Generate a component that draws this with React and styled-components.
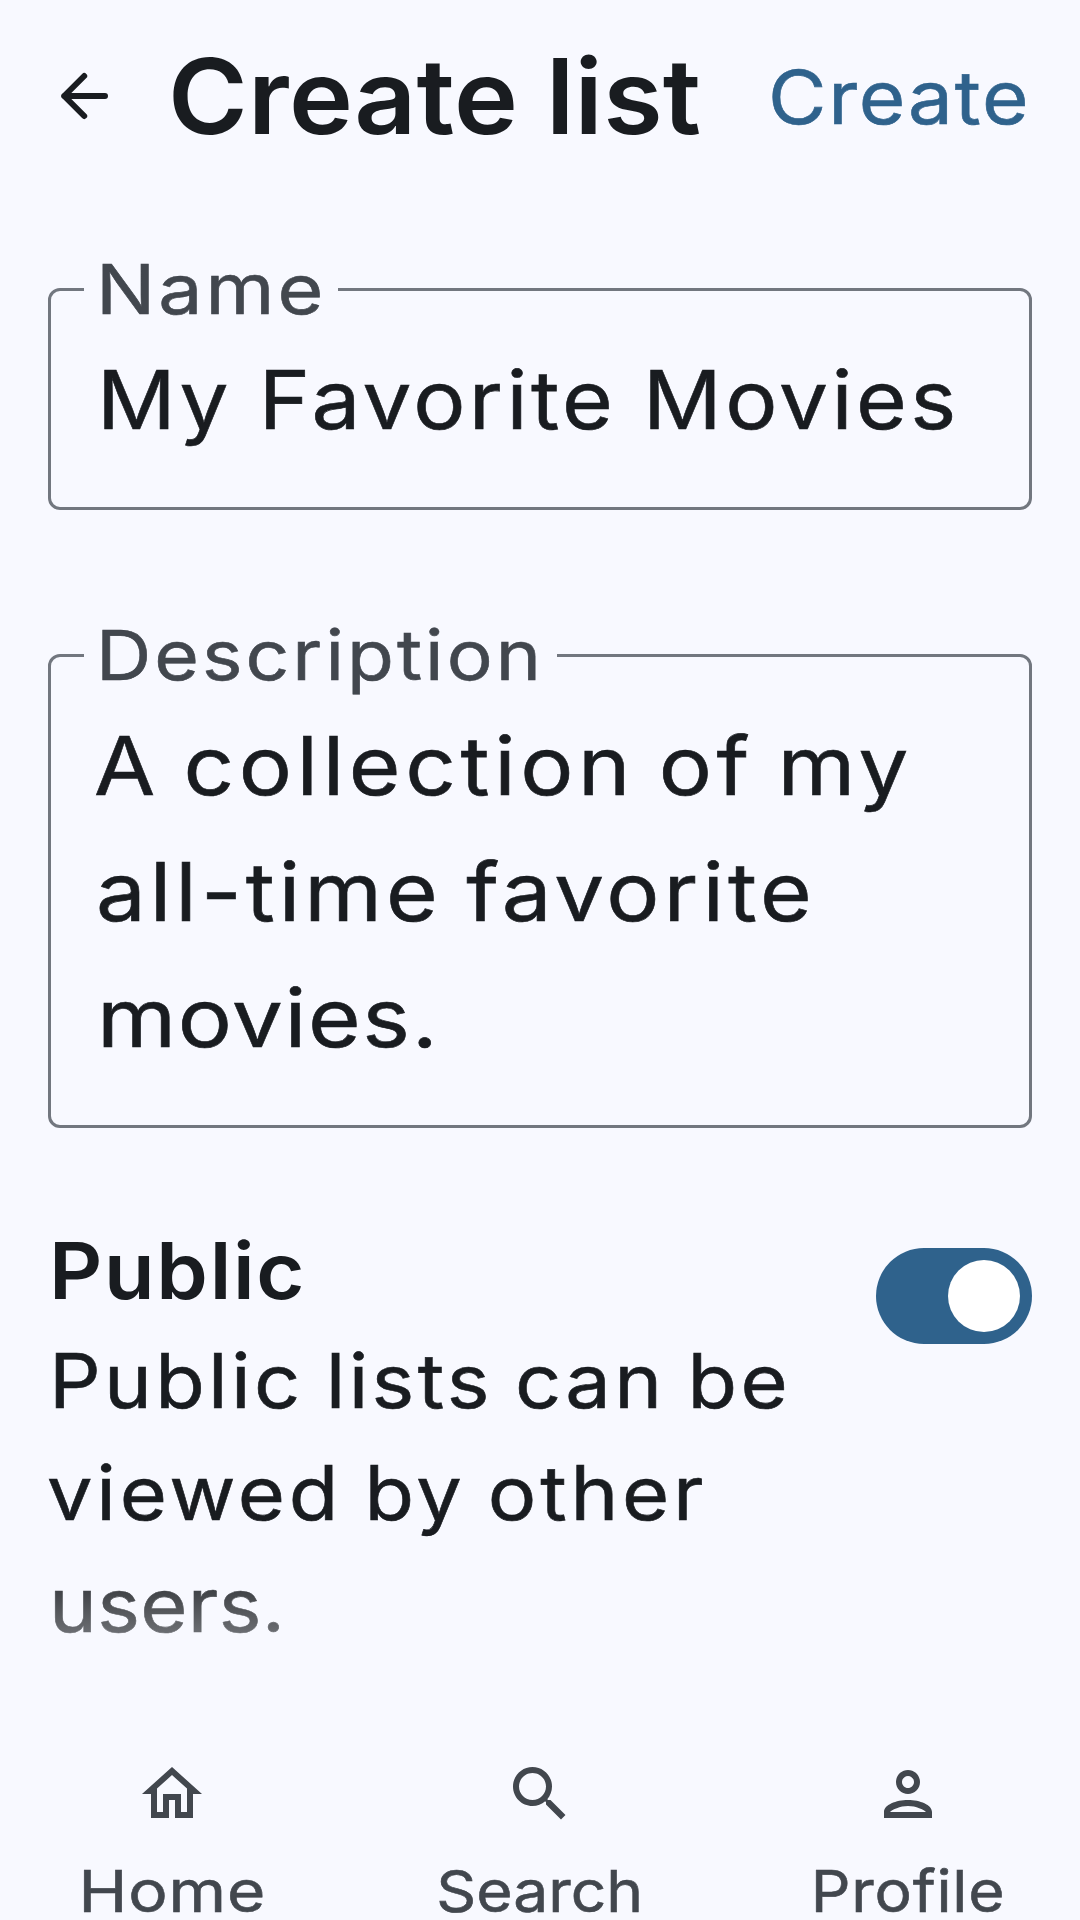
import React, { useState } from "react";
import styled, { createGlobalStyle } from "styled-components";

const color = {
  background: "#f8f9ff",
  text: "#191c20",
  muted: "#42474e",
  outline: "#72777f",
  primary: "#2f628c",
};

const GlobalStyle = createGlobalStyle`
  * { box-sizing: border-box; }
  body {
    margin: 0;
    background: ${color.background};
    color: ${color.text};
    font-family: Inter, "Liberation Sans", sans-serif;
  }
`;

const Screen = styled.div`
  display: flex;
  flex-direction: column;
  width: 1080px;
  height: 1920px;
  overflow: hidden;
  background: ${color.background};
`;

/* Widened lettering: every run of text is set a little broader than the base face. */
const Wide = styled.span`
  display: inline-block;
  margin-left: ${(p) => p.$outdent || 0}px;
  white-space: pre;
  letter-spacing: ${(p) => p.$track || 0}px;
  word-spacing: ${(p) => p.$words || 0}px;
  transform: scaleX(${(p) => p.$stretch || 1.08});
  transform-origin: ${(p) => p.$origin || "left"} center;
  -webkit-text-stroke: ${(p) => (p.$bold ? 0 : 0.6)}px currentColor;
`;

const Header = styled.header`
  display: flex;
  align-items: center;
  height: 192px;
  padding: 0 48px;
`;

const IconButton = styled.button`
  display: flex;
  width: 72px;
  height: 72px;
  padding: 0;
  border: 0;
  background: none;
  color: inherit;
`;

const Title = styled.h1`
  flex: 1;
  margin: 0 0 0 48px;
  font-size: 104px;
  font-weight: 600;
  line-height: 144px;
`;

const TextButton = styled.button`
  width: 264px;
  padding: 2px 0 0;
  border: 0;
  background: none;
  color: ${color.primary};
  font-family: inherit;
  font-size: 74px;
  font-weight: 400;
  line-height: 120px;
  text-align: left;
`;

const Content = styled.main`
  position: relative;
  flex: 1;
  min-height: 0;
  padding: 50px 48px 0;
  overflow: hidden;
`;

const Form = styled.form`
  display: flex;
  flex-direction: column;
  gap: 98px;
`;

const Field = styled.fieldset`
  min-width: 0;
  margin: 0;
  padding: 0 33px 44px;
  border: 3px solid ${color.outline};
  border-radius: 12px;
`;

const FieldLabel = styled.legend`
  width: ${(p) => p.$width}px;
  padding: 0 0 0 13px;
  color: ${color.muted};
  font-size: 69px;
  line-height: 95px;
`;

const FieldValue = styled.div`
  display: flex;
  flex-direction: column;
  align-items: flex-start;
  padding-left: 13px;
  font-size: 80.7px;
  line-height: 126px;
`;

const Setting = styled.section`
  display: flex;
  justify-content: space-between;
  margin-top: 89px;
`;

const SettingText = styled.div`
  padding-left: 1px;
`;

const SettingTitle = styled.h2`
  margin: 0;
  font-size: 78px;
  font-weight: 600;
  line-height: 108px;
`;

const SettingBody = styled.div`
  display: flex;
  flex-direction: column;
  align-items: flex-start;
  font-size: 75px;
  line-height: 112px;
`;

const Switch = styled.button`
  display: flex;
  justify-content: ${(p) => (p.$on ? "flex-end" : "flex-start")};
  width: 156px;
  height: 96px;
  margin-top: 31px;
  padding: 12px;
  border: 0;
  border-radius: 48px;
  background: ${(p) => (p.$on ? color.primary : color.outline)};
`;

const Knob = styled.span`
  width: 72px;
  height: 72px;
  border-radius: 50%;
  background: #fff;
`;

const BottomFade = styled.div`
  position: absolute;
  inset: auto 0 0;
  height: 176px;
  background: linear-gradient(rgba(248, 249, 255, 0), rgba(248, 249, 255, 0.8));
  pointer-events: none;
`;

const Nav = styled.nav`
  display: grid;
  grid-template-columns: repeat(3, 1fr);
  gap: 24px;
  height: 192px;
  padding-top: 30px;
`;

const NavItem = styled.a`
  display: flex;
  flex-direction: column;
  align-items: center;
  gap: 32px;
  color: ${color.muted};
  font-size: 57.7px;
  line-height: 58px;
`;

const BackIcon = () => (
  <svg width="72" height="72" viewBox="0 0 72 72" fill="none" stroke="currentColor" strokeWidth="6" strokeLinecap="round" strokeLinejoin="round">
    <path d="M36.2 16 16.2 36l20 20M16.2 36H57" />
  </svg>
);

const navItems = [
  {
    label: "Home",
    track: 0.8,
    stretch: 1.14,
    path: "M12 5.69l5 4.5V18h-2v-6H9v6H7v-7.81l5-4.5M12 3L2 12h3v8h6v-6h2v6h6v-8h3L12 3z",
  },
  {
    label: "Search",
    track: 0,
    stretch: 1.08,
    path: "M15.5 14h-.79l-.28-.27C15.41 12.59 16 11.11 16 9.5 16 5.91 13.09 3 9.5 3S3 5.91 3 9.5 5.91 16 9.5 16c1.61 0 3.09-.59 4.23-1.57l.27.28v.79l5 4.99L20.49 19l-4.99-5zm-6 0C7.01 14 5 11.99 5 9.5S7.01 5 9.5 5 14 7.01 14 9.5 11.99 14 9.5 14z",
  },
  {
    label: "Profile",
    track: 0.7,
    stretch: 1.08,
    path: "M12 6c1.1 0 2 .9 2 2s-.9 2-2 2-2-.9-2-2 .9-2 2-2m0-2C9.79 4 8 5.79 8 8s1.79 4 4 4 4-1.79 4-4-1.79-4-4-4zm0 12c2.7 0 5.22 1.25 6 2H6c.8-.75 3.31-2 6-2m0-2c-4 0-8 1.6-8 4v2h16v-2c0-2.4-4-4-8-4z",
  },
];

export default function App() {
  const [isPublic, setIsPublic] = useState(true);

  return (
    <>
      <GlobalStyle />
      <Screen>
        <Header>
          <IconButton aria-label="Back">
            <BackIcon />
          </IconButton>
          <Title>
            <Wide $bold $stretch={1.04} $track={0.3}>Create list</Wide>
          </Title>
          <TextButton>
            <Wide $track={1.7}>Create</Wide>
          </TextButton>
        </Header>

        <Content>
          <Form>
            <Field>
              <FieldLabel $width={254}>
                <Wide $stretch={1.14} $track={2.65} $outdent={-1}>Name</Wide>
              </FieldLabel>
              <FieldValue>
                <Wide $track={3.15} $words={-1}>My Favorite Movies</Wide>
              </FieldValue>
            </Field>
            <Field>
              <FieldLabel $width={473}>
                <Wide $stretch={1.11} $track={2.75} $outdent={-1}>Description</Wide>
              </FieldLabel>
              <FieldValue>
                <Wide $stretch={1.1} $track={4.2} $words={-5.5} $outdent={-3}>A collection of my</Wide>
                <Wide $stretch={1.1} $track={3.65} $words={-4.2} $outdent={-1}>all-time favorite</Wide>
                <Wide $stretch={1.12} $track={1.5}>movies.</Wide>
              </FieldValue>
            </Field>
          </Form>

          <Setting>
            <SettingText>
              <SettingTitle>
                <Wide $bold $stretch={1.06} $track={1.6}>Public</Wide>
              </SettingTitle>
              <SettingBody>
                <Wide $track={3.05} $words={-3.5}>Public lists can be</Wide>
                <Wide $track={3.5} $words={-4} $outdent={-2}>viewed by other</Wide>
                <Wide $track={0.3}>users.</Wide>
              </SettingBody>
            </SettingText>
            <Switch
              role="switch"
              aria-checked={isPublic}
              $on={isPublic}
              onClick={() => setIsPublic(!isPublic)}
            >
              <Knob />
            </Switch>
          </Setting>
          <BottomFade />
        </Content>

        <Nav>
          {navItems.map((item) => (
            <NavItem key={item.label}>
              <svg width="72" height="72" viewBox="0 0 24 24" fill="currentColor">
                <path d={item.path} />
              </svg>
              <Wide $origin="center" $stretch={item.stretch} $track={item.track}>{item.label}</Wide>
            </NavItem>
          ))}
        </Nav>
      </Screen>
    </>
  );
}
